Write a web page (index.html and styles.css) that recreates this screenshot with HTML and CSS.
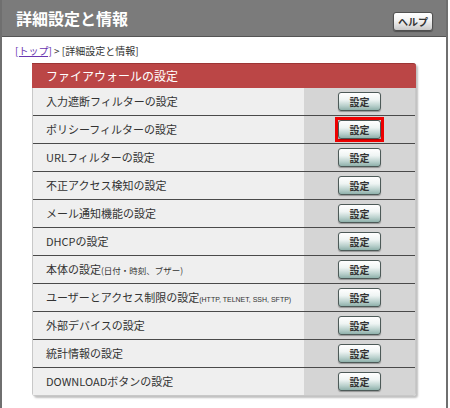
FILE: index.html
```html
<!DOCTYPE html>
<html lang="ja">
<head>
<meta charset="utf-8">
<title>詳細設定と情報</title>
<link rel="stylesheet" href="styles.css">
</head>
<body>
<div class="frame">
  <div class="header">
    <h1 class="title">詳細設定と情報</h1>
    <button class="help">ヘルプ</button>
  </div>
  <div class="crumb"><a class="crumb-link" href="#">[トップ]</a> &gt; [詳細設定と情報]</div>
  <div class="panel">
    <div class="panel-head">ファイアウォールの設定</div>
    <div class="row"><div class="label">入力遮断フィルターの設定</div><div class="action"><button class="set">設定</button></div></div>
    <div class="row"><div class="label">ポリシーフィルターの設定</div><div class="action"><span class="mark"><button class="set">設定</button></span></div></div>
    <div class="row"><div class="label">URLフィルターの設定</div><div class="action"><button class="set">設定</button></div></div>
    <div class="row"><div class="label">不正アクセス検知の設定</div><div class="action"><button class="set">設定</button></div></div>
    <div class="row"><div class="label">メール通知機能の設定</div><div class="action"><button class="set">設定</button></div></div>
    <div class="row"><div class="label">DHCPの設定</div><div class="action"><button class="set">設定</button></div></div>
    <div class="row"><div class="label">本体の設定<span class="small">(日付・時刻、ブザー)</span></div><div class="action"><button class="set">設定</button></div></div>
    <div class="row"><div class="label">ユーザーとアクセス制限の設定<span class="small-latin">(HTTP, TELNET, SSH, SFTP)</span></div><div class="action"><button class="set">設定</button></div></div>
    <div class="row"><div class="label">外部デバイスの設定</div><div class="action"><button class="set">設定</button></div></div>
    <div class="row"><div class="label">統計情報の設定</div><div class="action"><button class="set">設定</button></div></div>
    <div class="row last"><div class="label">DOWNLOADボタンの設定</div><div class="action"><button class="set">設定</button></div></div>
  </div>
</div>
</body>
</html>
```
FILE: styles.css
```css
html, body {
  margin: 0;
  padding: 0;
  background: #ffffff;
}
body {
  font-family: "Noto Sans CJK JP", "Liberation Sans", sans-serif;
  color: #333;
}
.frame {
  width: 448px;
  height: 408px;
  box-sizing: border-box;
  border-left: 2px solid #6f6f6f;
  border-right: 2px solid #6f6f6f;
  background: #fff;
}
.header {
  height: 36px;
  background: #7b7b7b;
  border-bottom: 1px solid #555;
  display: flex;
  align-items: center;
  justify-content: space-between;
  padding: 0 13px 0 14px;
}
.title {
  margin: 0;
  font-size: 16px;
  font-weight: bold;
  color: #fff;
  line-height: 1;
}
.help {
  width: 40px;
  height: 19px;
  margin-top: 6px;
  padding: 0;
  border: 1px solid #505050;
  border-radius: 3px;
  background: linear-gradient(#ffffff, #f2f2f2 45%, #c9c9c9);
  box-shadow: 0 1px 1px rgba(0,0,0,0.35);
  font-family: "Noto Sans CJK JP", sans-serif;
  font-size: 10px;
  font-weight: bold;
  color: #333;
  line-height: 17px;
}
.crumb {
  font-size: 10px;
  line-height: 12px;
  padding: 8px 0 0 13px;
  height: 18px;
  color: #333;
}
.crumb-link {
  color: #6a35b0;
  text-decoration: underline;
}
.panel {
  margin-left: 30px;
  width: 384px;
  box-sizing: border-box;
  border: 1px solid #c8c8c8;
  border-top: none;
  box-shadow: 2px 2px 2px rgba(0,0,0,0.25);
  border-radius: 0 3px 3px 3px;
}
.panel-head {
  height: 24px;
  background: #bb4646;
  border-top: 1px solid #9c3535;
  border-radius: 0 3px 0 0;
  margin: 0 -1px;
  color: #fff;
  font-size: 12px;
  line-height: 24px;
  padding-left: 14px;
}
.row {
  display: flex;
  height: 27px;
  border-bottom: 1px solid #4a4a4a;
}
.row.last {
  border-bottom: none;
}
.label {
  width: 271px;
  background: #efefef;
  font-size: 11px;
  line-height: 27px;
  padding-left: 13px;
  box-sizing: border-box;
  white-space: nowrap;
  overflow: hidden;
  color: #333;
}
.small {
  font-size: 8.5px;
}
.small-latin {
  font-family: "Liberation Sans", sans-serif;
  font-size: 7px;
}
.action {
  flex: 1;
  background: #d5d5d5;
  display: flex;
  align-items: center;
  justify-content: center;
}
.mark {
  display: flex;
  border: 3px solid #ee0000;
  margin: -3px;
}
.set {
  width: 43px;
  height: 19px;
  padding: 0;
  border: 1px solid #4d5a58;
  border-radius: 3px;
  background: linear-gradient(#ffffff, #eef4f3 40%, #b9d0cc 75%, #8fb1ab);
  box-shadow: 0 1px 1px rgba(0,0,0,0.3);
  font-family: "Noto Sans CJK JP", sans-serif;
  font-size: 10px;
  font-weight: bold;
  color: #333;
  line-height: 17px;
}
```
